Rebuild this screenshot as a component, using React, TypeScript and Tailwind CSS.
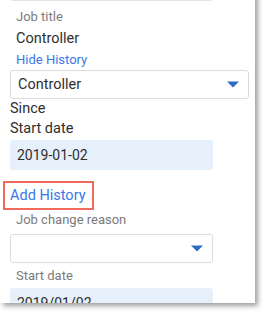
import { ReactNode } from 'react';

const font = { fontFamily: 'Roboto, "Liberation Sans", sans-serif' };

function Caret() {
  return (
    <svg width="12" height="7" viewBox="0 0 12 7" className="shrink-0">
      <path d="M0 0.5 L12 0.5 L6 6.5 Z" fill="#2a6bc6" />
    </svg>
  );
}

function Label({ children, className = '' }: { children: ReactNode; className?: string }) {
  return <div className={`pl-[16px] text-[13px] leading-[16px] text-[#7b7b7b] ${className}`}>{children}</div>;
}

export default function App() {
  return (
    <div className="w-[268px] h-[316px] bg-white overflow-hidden" style={font}>
      <div className="-mt-[30px] w-[255px] h-[333px] bg-white overflow-hidden shadow-[3px_3px_5px_rgba(0,0,0,0.38)]">
        <div className="ml-[10px] w-[203px] h-[31px] border border-[#e2e2e2] rounded-[3px]" />

        <Label className="mt-[8px]">Job title</Label>
        <div className="pl-[16px] mt-[5px] text-[14.5px] leading-[18px] text-[#2e2e2e]">Controller</div>
        <div className="pl-[16px] mt-[4px] text-[13px] leading-[16px] text-[#3b78e7]">Hide History</div>

        <div className="ml-[10px] mt-[2px] w-[239px] h-[29px] border border-[#dcdcdc] rounded-[3px] flex items-center justify-between pl-[7px] pr-[9px]">
          <span className="text-[14.5px] text-[#2e2e2e]">Controller</span>
          <Caret />
        </div>

        <div className="pl-[10px] mt-[1px] text-[14.5px] leading-[18px] text-[#2e2e2e]">Since</div>
        <div className="pl-[10px] mt-[2px] text-[14.5px] leading-[18px] text-[#2e2e2e]">Start date</div>
        <div className="ml-[10px] mt-[2px] w-[203px] h-[30px] bg-[#e6f0fb] rounded-[3px] flex items-center pl-[7px] text-[14px] text-[#2e2e2e]">
          2019-01-02
        </div>

        <div className="ml-[3px] mt-[11px] w-[91px] h-[29px] border-2 border-[#f06b5e] flex items-center pl-[5px] text-[14.5px] whitespace-nowrap text-[#3b78e7]">
          Add History
        </div>

        <Label className="mt-[2px]">Job change reason</Label>
        <div className="ml-[10px] mt-[6px] w-[203px] h-[29px] border border-[#dcdcdc] rounded-[3px] flex items-center justify-end pr-[9px]">
          <Caret />
        </div>
        <Label className="mt-[5px]">Start date</Label>
        <div className="ml-[10px] mt-[4px] w-[203px] h-[30px] bg-[#e6f0fb] rounded-[3px] flex items-center pl-[7px] text-[14px] text-[#2e2e2e]">
          2019/01/02
        </div>
      </div>
    </div>
  );
}
